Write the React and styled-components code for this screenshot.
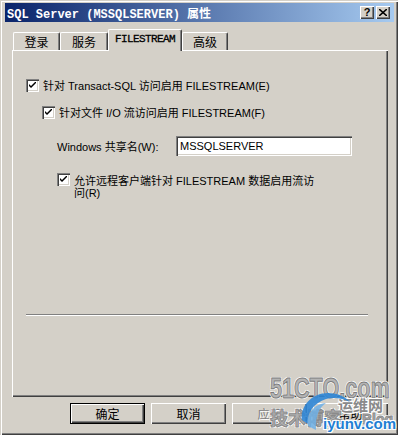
import React from "react";
import styled, { createGlobalStyle, css } from "styled-components";

const face = "#d4d0c8";
const shadow = "#808080";
const dark = "#404040";
const uiFont = `"Liberation Sans", "Noto Sans CJK SC", sans-serif`;

const GlobalStyle = createGlobalStyle`
  html, body {
    margin: 0;
    padding: 0;
    background: #fff;
  }
  body {
    font-family: ${uiFont};
    font-size: 11px;
    color: #000;
  }
`;

const raised = css`
  box-shadow: inset 1px 1px #fff, inset -1px -1px ${dark}, inset -2px -2px ${shadow};
`;

const sunken = css`
  box-shadow: inset 1px 1px ${shadow}, inset 2px 2px ${dark}, inset -1px -1px #fff,
    inset -2px -2px ${face};
`;

const Window = styled.div`
  position: relative;
  box-sizing: border-box;
  width: 398px;
  height: 435px;
  padding: 3px 4px 0 5px;
  background: ${face};
  box-shadow: inset 1px 1px ${face}, inset 2px 2px #fff, inset -1px -1px ${dark},
    inset -2px -2px ${shadow};
  display: flex;
  flex-direction: column;
`;

const TitleBar = styled.div`
  height: 19px;
  display: flex;
  align-items: center;
  padding: 0 4px 0 2px;
  background: linear-gradient(to right, #0a246a, #a6caf0);
`;

const Title = styled.span`
  flex: 1;
  color: #fff;
  font: bold 12px "Liberation Mono", "Noto Sans CJK SC", monospace;
  white-space: nowrap;
`;

const CaptionButton = styled.div`
  box-sizing: border-box;
  width: 14px;
  height: 13px;
  margin-left: ${(p) => p.$gap || 0}px;
  background: ${face};
  ${raised};
  display: flex;
  align-items: center;
  justify-content: center;
  font: bold 11px "Liberation Sans", sans-serif;
  line-height: 1;
  padding-bottom: 1px;
`;

const Body = styled.div`
  display: flex;
  flex-direction: column;
  padding: 7px 0 0 7px;
`;

const TabStrip = styled.div`
  display: flex;
  align-items: flex-end;
  height: 21px;
  padding-left: 1px;
`;

const Tab = styled.div`
  position: relative;
  z-index: ${(p) => (p.$active ? 1 : 0)};
  box-sizing: border-box;
  width: ${(p) => p.$w}px;
  height: ${(p) => (p.$active ? 22 : 18)}px;
  margin-bottom: ${(p) => (p.$active ? -1 : 0)}px;
  padding-bottom: ${(p) => (p.$active ? 3 : 0)}px;
  background: ${face};
  border-top: 1px solid #fff;
  border-left: 1px solid #fff;
  border-right: 1px solid ${dark};
  border-radius: 2px 2px 0 0;
  box-shadow: inset -1px 0 ${shadow};
  display: flex;
  align-items: center;
  justify-content: center;
  font-size: 12px;
  ${(p) =>
    p.$mono &&
    css`
      font-family: "Liberation Mono", monospace;
      font-size: 11px;
      letter-spacing: -0.6px;
      -webkit-text-stroke: 0.3px #000;
    `}
`;

const Panel = styled.div`
  box-sizing: border-box;
  width: 376px;
  height: 347px;
  padding: 29px 0 0 14px;
  background: ${face};
  box-shadow: inset 1px 1px #fff, inset -1px -1px ${dark}, inset -2px -2px ${shadow};
  display: flex;
  flex-direction: column;
`;

const Row = styled.div`
  display: flex;
  align-items: ${(p) => (p.$top ? "flex-start" : "center")};
  margin-top: ${(p) => p.$gap || 0}px;
  margin-left: ${(p) => p.$indent || 0}px;
  min-height: 13px;
`;

const Box = styled.span`
  flex: none;
  box-sizing: border-box;
  width: 13px;
  height: 13px;
  margin-right: 4px;
  background: #fff;
  ${sunken};
  display: flex;
  align-items: center;
  justify-content: center;
`;

const Label = styled.span`
  white-space: nowrap;
  line-height: 12px;
  margin-top: ${(p) => p.$shift || 0}px;
`;

const FieldLabel = styled.span`
  width: 119px;
  white-space: nowrap;
`;

const Input = styled.div`
  box-sizing: border-box;
  width: 176px;
  height: 20px;
  padding: 0 4px;
  background: #fff;
  ${sunken};
  display: flex;
  align-items: center;
`;

const Separator = styled.div`
  height: 0;
  margin: auto 20px 81px 0;
  border-top: 1px solid ${shadow};
  border-bottom: 1px solid #fff;
`;

const ButtonRow = styled.div`
  width: 376px;
  display: flex;
  justify-content: flex-end;
  gap: 6px;
  margin-top: 6px;
`;

const Button = styled.div`
  box-sizing: border-box;
  width: 75px;
  height: 21px;
  background: ${face};
  border: ${(p) => (p.$default ? "1px solid #000" : "none")};
  ${raised};
  display: flex;
  align-items: center;
  justify-content: center;
  font-size: 12px;
  color: ${(p) => (p.$disabled ? shadow : "#000")};
  text-shadow: ${(p) => (p.$disabled ? "1px 1px #fff" : "none")};
`;

const Watermark = styled.div`
  position: absolute;
  left: 266px;
  top: 370px;
  width: 134px;
  height: 66px;
  pointer-events: none;
`;

const Mark = styled.span`
  position: absolute;
  left: ${(p) => p.$x}px;
  top: ${(p) => p.$y}px;
  white-space: nowrap;
  line-height: 1;
  font-family: "Liberation Sans", "Noto Sans CJK SC", sans-serif;
  font-weight: bold;
  font-size: ${(p) => p.$size}px;
  color: ${(p) => p.$color || "#a0a0a0"};
  -webkit-text-stroke: ${(p) => (p.$stroke ? `1px ${p.$stroke}` : "0")};
  text-shadow: 1px 1px 0 #fff, -1px -1px 0 #fff, 1px -1px 0 #fff, -1px 1px 0 #fff;
  transform: scaleX(${(p) => p.$sx || 1});
  transform-origin: left top;
`;

const Swoosh = styled.svg`
  position: absolute;
  left: 32px;
  top: 20px;
`;

const Check = () => (
  <svg width="7" height="7" viewBox="0 0 7 7">
    <path d="M0 2 L0 4 L2 6 L7 1 L7 -1 L2 4 Z" fill="#000" />
  </svg>
);

const CheckRow = ({ gap, indent, top, shift, children }) => (
  <Row $gap={gap} $indent={indent} $top={top}>
    <Box>
      <Check />
    </Box>
    <Label $shift={shift}>{children}</Label>
  </Row>
);

export default function App() {
  return (
    <>
      <GlobalStyle />
      <Window>
        <TitleBar>
          <Title>SQL Server (MSSQLSERVER) 属性</Title>
          <CaptionButton>?</CaptionButton>
          <CaptionButton $gap={2}>
            <svg width="8" height="7" viewBox="0 0 8 7">
              <path d="M0 0 L8 7 M8 0 L0 7" stroke="#000" strokeWidth="1.6" />
            </svg>
          </CaptionButton>
        </TitleBar>

        <Body>
          <TabStrip>
            <Tab $w={47}>登录</Tab>
            <Tab $w={48}>服务</Tab>
            <Tab $w={74} $active $mono>
              FILESTREAM
            </Tab>
            <Tab $w={46}>高级</Tab>
          </TabStrip>

          <Panel>
            <CheckRow>针对 Transact-SQL 访问启用 FILESTREAM(E)</CheckRow>
            <CheckRow gap={14} indent={16}>
              针对文件 I/O 流访问启用 FILESTREAM(F)
            </CheckRow>
            <Row $gap={17} $indent={31}>
              <FieldLabel>Windows 共享名(W):</FieldLabel>
              <Input>MSSQLSERVER</Input>
            </Row>
            <CheckRow gap={17} indent={31} top shift={2}>
              允许远程客户端针对 FILESTREAM 数据启用流访
              <br />
              问(R)
            </CheckRow>
            <Separator />
          </Panel>

          <ButtonRow>
            <Button $default>确定</Button>
            <Button>取消</Button>
            <Button $disabled>应用</Button>
            <Button>帮助</Button>
          </ButtonRow>
        </Body>

        <Watermark>
          <Mark $x={4} $y={3} $size={30} $sx={0.72} $color="#b4b4b4" $stroke="#7c7c7c">
            51CTO.com
          </Mark>
          <Mark $x={72} $y={28} $size={15} $color="#8a8a8a">
            运维网
          </Mark>
          <Mark $x={4} $y={40} $size={18} $color="#b0b0b0" $stroke="#8a8a8a">
            技术博客
          </Mark>
          <Mark $x={96} $y={42} $size={14} $color="#b0b0b0" $stroke="#8a8a8a">
            Blog
          </Mark>
          <Swoosh width="60" height="44" viewBox="0 0 60 44">
            <path
              d="M4 30 C2 16 14 3 30 3 C40 3 48 7 52 12 C44 8 36 7 28 9 C16 13 9 22 10 34 Z"
              fill="#2f86d6"
              opacity="0.9"
            />
            <path
              d="M10 36 C8 24 16 14 28 13 C22 17 17 25 18 40 Z"
              fill="#6fb0e6"
              opacity="0.85"
            />
          </Swoosh>
          <Mark $x={57} $y={46} $size={15} $color="#1f7fd4">
            iyunv.com
          </Mark>
        </Watermark>
      </Window>
    </>
  );
}
